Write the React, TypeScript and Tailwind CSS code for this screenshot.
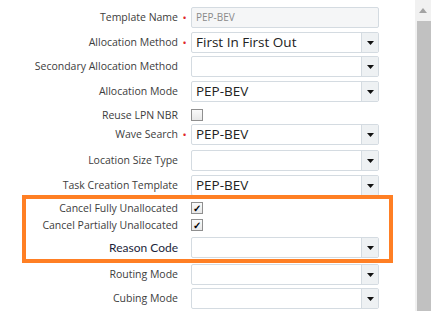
import React from 'react';

type Row = {
  label: string;
  kind: 'text' | 'select' | 'check';
  value?: string;
  required?: boolean;
  checked?: boolean;
  mt: string;
  strong?: boolean;
};

const topRows: Row[] = [
  { label: 'Template Name', kind: 'text', value: 'PEP-BEV', required: true, mt: 'mt-[7px]' },
  { label: 'Allocation Method', kind: 'select', value: 'First In First Out', required: true, mt: 'mt-[4px]' },
  { label: 'Secondary Allocation Method', kind: 'select', mt: 'mt-[3px]' },
  { label: 'Allocation Mode', kind: 'select', value: 'PEP-BEV', mt: 'mt-[4px]' },
  { label: 'Reuse LPN NBR', kind: 'check', mt: 'mt-[7px]' },
  { label: 'Wave Search', kind: 'select', value: 'PEP-BEV', required: true, mt: 'mt-[3px]' },
  { label: 'Location Size Type', kind: 'select', mt: 'mt-[5px]' },
  { label: 'Task Creation Template', kind: 'select', value: 'PEP-BEV', mt: 'mt-[4px]' },
];

const boxRows: Row[] = [
  { label: 'Cancel Fully Unallocated', kind: 'check', checked: true, mt: 'mt-[3px]' },
  { label: 'Cancel Partially Unallocated', kind: 'check', checked: true, mt: 'mt-[5px]' },
  { label: 'Reason Code', kind: 'select', strong: true, mt: 'mt-[6px]' },
];

const bottomRows: Row[] = [
  { label: 'Routing Mode', kind: 'select', mt: 'mt-[1px]' },
  { label: 'Cubing Mode', kind: 'select', mt: 'mt-[3px]' },
];

const Caret = () => (
  <svg width="7" height="4" viewBox="0 0 7 4">
    <path d="M0 0h7L3.5 4z" fill="#111" />
  </svg>
);

const Field = ({ row }: { row: Row }) => {
  if (row.kind === 'check') {
    return (
      <div className="h-[12px] w-[12px] border border-[#8f8f8f] bg-gradient-to-b from-[#fafafa] to-[#e8e8e8] flex items-center justify-center text-[10px] leading-none text-black font-bold">
        {row.checked ? '✓' : ''}
      </div>
    );
  }
  if (row.kind === 'text') {
    return (
      <div className="h-[21px] w-[188px] rounded-[2px] border border-[#d4dbe1] bg-[#f5f6f7] px-[4px] flex items-center text-[10px] text-[#8a8a8a]">
        {row.value}
      </div>
    );
  }
  return (
    <div className="h-[21px] w-[188px] rounded-[2px] border border-[#d4dbe1] bg-white flex items-stretch">
      <div className="flex-1 px-[4px] flex items-center text-[13.5px] text-[#222]">{row.value}</div>
      <div className="w-[17px] border-l border-[#d4dbe1] bg-[#eef1f3] flex items-center justify-center">
        <Caret />
      </div>
    </div>
  );
};

const FormRow = ({ row, inBox }: { row: Row; inBox?: boolean }) => (
  <div className={`flex items-center ${row.kind === 'check' ? 'h-[12px]' : 'h-[21px]'} ${row.mt}`}>
    <div
      className={`${inBox ? 'w-[152px]' : 'w-[178px]'} text-right whitespace-nowrap leading-none ${
        row.strong ? "text-[12px] text-[#1c1f3b] font-['Lato',sans-serif]" : 'text-[10.5px] text-[#3d3d3d]'
      }`}
    >
      {row.label}
    </div>
    <div className="w-[13px] flex justify-center text-[#e0262b] text-[11px] leading-none">
      {row.required ? '•' : ''}
    </div>
    <Field row={row} />
  </div>
);

export default function App() {
  return (
    <div className="w-[431px] h-[311px] bg-white flex overflow-hidden font-['Open_Sans',sans-serif]">
      <div className="flex-1 flex flex-col">
        {topRows.map((r) => (
          <FormRow key={r.label} row={r} />
        ))}
        <div className="mt-[-1px] ml-[22px] w-[371px] pb-[1px] border-[4px] border-[#ff7f24] flex flex-col">
          {boxRows.map((r) => (
            <FormRow key={r.label} row={r} inBox />
          ))}
        </div>
        {bottomRows.map((r) => (
          <FormRow key={r.label} row={r} />
        ))}
      </div>
      <div className="w-[16px] bg-[#f1f1f1] flex flex-col">
        <div className="h-[21px] flex items-center justify-center">
          <svg width="8" height="5" viewBox="0 0 8 5">
            <path d="M0 5h8L4 0z" fill="#a3a3a3" />
          </svg>
        </div>
        <div className="flex-1 ml-[2px] bg-[#c1c1c1]" />
      </div>
    </div>
  );
}
